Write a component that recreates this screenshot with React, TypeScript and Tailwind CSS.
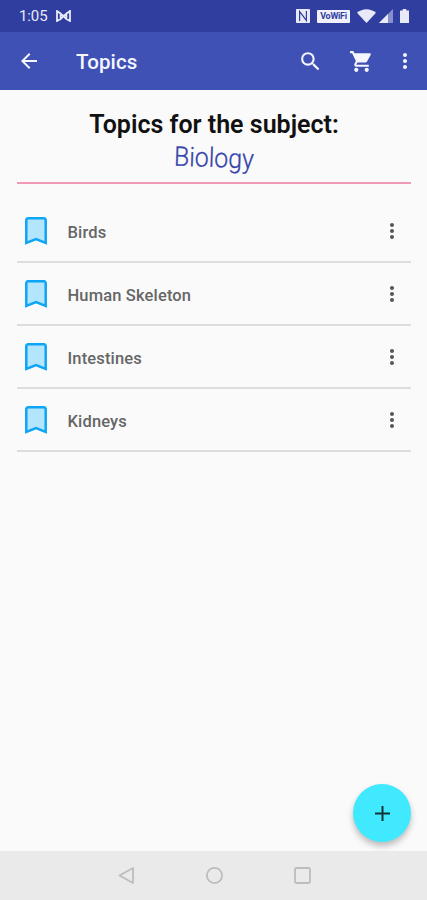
import { MdArrowBack, MdMoreVert, MdSearch, MdShoppingCart } from "react-icons/md";

const topics = [
  { id: 1, name: "Birds" },
  { id: 2, name: "Human Skeleton" },
  { id: 3, name: "Intestines" },
  { id: 4, name: "Kidneys" },
];

function StatusBar() {
  return (
    <div className="h-8 shrink-0 bg-[#303f9f] flex items-center pl-[19px] pr-[18px] text-[#e8eaf9]">
      <span className="pt-px text-[15px] leading-none tracking-[-0.1px]">1:05</span>
      <svg className="ml-[8px] w-[15px] h-[12px]" viewBox="0 0 15 12" fill="none" stroke="currentColor" strokeWidth={1.8}>
        <path d="M1 1v10l3.6-2V3.4zM14 1v10l-3.6-2V3.4zM1 1l6.5 5L14 1M4.6 9l2.9-3 2.9 3" />
      </svg>
      <div className="ml-auto flex items-center">
        {/* NFC */}
        <svg className="w-[14px] h-[14px]" viewBox="0 0 14 14">
          <rect width="14" height="14" rx="0.8" fill="currentColor" />
          <path d="M3.6 12V2.6l6.8 8.8V2" fill="none" stroke="#303f9f" strokeWidth={1.2} />
        </svg>
        <span className="ml-[7px] w-[33px] h-[13px] rounded-[1px] bg-[#f0f1fb] text-[#303f9f] text-[9px] font-bold leading-[13px] text-center tracking-[-0.3px]">
          VoWiFi
        </span>
        {/* Wifi, signal, battery */}
        <svg className="ml-[7px] w-[19px] h-[14px]" viewBox="0 0 19 14">
          <path d="M0 3.7C5.2-1 13.8-1 19 3.7L9.5 14z" fill="currentColor" />
        </svg>
        <svg className="ml-[3px] w-[14px] h-[14px]" viewBox="0 0 14 14">
          <path d="M0 14L14 0v14z" fill="#8790cc" />
          <path d="M0 14L9 5V14z" fill="currentColor" />
        </svg>
        <svg className="ml-[7px] w-[9px] h-[14px]" viewBox="0 0 9 14">
          <path d="M2.7 0h3.6v1.6H9V14H0V1.6h2.7z" fill="currentColor" />
        </svg>
      </div>
    </div>
  );
}

function AppBar() {
  return (
    <header className="h-[58px] shrink-0 bg-[#3f51b5] flex items-center pl-[17px] pr-[10px] text-[#f5f6ff]">
      <MdArrowBack className="w-[24px] h-[24px]" />
      <h1 className="ml-[35px] pt-[2px] text-[20.5px] font-medium tracking-[0.1px]">Topics</h1>
      <div className="ml-auto flex items-center">
        <MdSearch className="w-[25px] h-[25px]" />
        <MdShoppingCart className="ml-[26px] w-[25px] h-[25px]" />
        <MdMoreVert className="ml-[19px] w-[24px] h-[24px]" />
      </div>
    </header>
  );
}

function TopicRow({ name }: { name: string }) {
  return (
    <li className="h-[63px] flex items-center pl-[8px] pr-[7px] border-b-2 border-[#dddddd]">
      <svg className="w-[22px] h-[28px]" viewBox="0 0 22 28">
        <path
          d="M3 1.3h16a1.7 1.7 0 0 1 1.7 1.7v22.9L11 22 1.3 25.9V3A1.7 1.7 0 0 1 3 1.3z"
          fill="#b3e5fc"
          stroke="#0da5f5"
          strokeWidth={2.5}
        />
      </svg>
      <span className="ml-[20.5px] pt-[5px] whitespace-nowrap text-[16.5px] tracking-[0.15px] font-medium text-[#666666]">
        {name}
      </span>
      <MdMoreVert className="ml-auto w-[24px] h-[24px] text-[#555555]" />
    </li>
  );
}

export default function App() {
  return (
    <div className="relative w-full h-[900px] flex flex-col overflow-hidden bg-[#fafafa] font-[Roboto,sans-serif]">
      <StatusBar />
      <AppBar />

      <main className="flex-1 pl-[17px] pr-4">
        <div className="h-[94px] pt-[20px] border-b-2 border-[#f09ab5] text-center">
          <h2 className="text-[25px] leading-[30px] font-semibold text-[#111111] whitespace-nowrap">
            Topics for the subject:
          </h2>
          <p className="text-[27px] leading-[37px] font-light text-[#3444a8] [-webkit-text-stroke:0.3px_#3444a8] rotate-2 scale-x-[0.92]">
            Biology
          </p>
        </div>
        <ul className="mt-4">
          {topics.map((topic) => (
            <TopicRow key={topic.id} name={topic.name} />
          ))}
        </ul>
      </main>

      <button
        aria-label="Add topic"
        className="absolute right-4 bottom-[58px] w-[58px] h-[58px] rounded-full bg-[#40e9fe] shadow-[0_4px_6px_rgba(0,0,0,0.25)] flex items-center justify-center"
      >
        <svg className="w-[15px] h-[15px]" viewBox="0 0 15 15" stroke="#10343a" strokeWidth={2}>
          <path d="M7.5 0v15M0 7.5h15" />
        </svg>
      </button>

      <nav className="h-[49px] shrink-0 bg-[#eaeaea] flex items-center justify-center gap-[71px] pl-px">
        <svg className="w-[17px] h-[17px]" viewBox="0 0 17 17" fill="none" stroke="#bdbdbd" strokeWidth={1.8} strokeLinejoin="round">
          <path d="M15 1v15L1.5 8.5z" />
        </svg>
        <svg className="w-[17px] h-[17px]" viewBox="0 0 17 17" fill="none" stroke="#bdbdbd" strokeWidth={1.8}>
          <circle cx="8.5" cy="8.5" r="7.6" />
        </svg>
        <svg className="w-[17px] h-[17px]" viewBox="0 0 17 17" fill="none" stroke="#bdbdbd" strokeWidth={1.8}>
          <rect x="1" y="1" width="15" height="15" rx="1.5" />
        </svg>
      </nav>
    </div>
  );
}
